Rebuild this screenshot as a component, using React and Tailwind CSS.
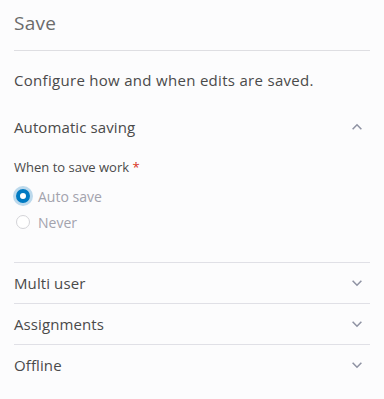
import React, { useState } from "react";

const Chevron = ({ up }) => (
  <svg width="14" height="14" viewBox="0 0 16 16" className="text-[#8f93a3]">
    <path
      d={up ? "M3 10.5 8 5.5 13 10.5" : "M3 5.5 8 10.5 13 5.5"}
      fill="none"
      stroke="currentColor"
      strokeWidth="1.8"
    />
  </svg>
);

const Section = ({ title, open, children }) => (
  <div className="border-t border-[#e0e0e6] first:border-t-0">
    <div className="flex items-center justify-between h-[40px] pr-[6px]">
      <span className="text-[15px] text-[#4a4a4a] tracking-[0.1px]">{title}</span>
      <Chevron up={open} />
    </div>
    {open && children}
  </div>
);

const Radio = ({ checked, label, onClick }) => (
  <label className="flex items-center gap-[8px] h-[26px] cursor-pointer" onClick={onClick}>
    {checked ? (
      <span className="ml-[2px] w-[14px] h-[14px] rounded-full border-[4px] border-[#007ac2] bg-white ring-[3px] ring-[#bcd9ec]" />
    ) : (
      <span className="ml-[2px] w-[14px] h-[14px] rounded-full border border-[#d4d4d8] bg-white" />
    )}
    <span className="text-[14px] text-[#a3a3ad]">{label}</span>
  </label>
);

export default function App() {
  const [mode, setMode] = useState("auto");

  return (
    <div
      className="w-[384px] h-[399px] bg-[#fcfcfd] px-[14px]"
      style={{ fontFamily: "'Open Sans', sans-serif" }}
    >
      <div className="pt-[9px] h-[51px] border-b border-[#dedee2] flex items-start">
        <h1 className="text-[19px] text-[#6b6b6b] leading-[28px] tracking-[0.3px]">Save</h1>
      </div>

      <p className="mt-[17px] text-[15px] text-[#4a4a4a] leading-[24px] tracking-[0.3px]">
        Configure how and when edits are saved.
      </p>

      <div className="mt-[15px]">
        <Section title="Automatic saving" open>
          <div className="pb-[27px] pt-[10px]">
            <div className="text-[13px] text-[#4a4a4a] leading-[20px] mb-[6px]">
              When to save work <span className="text-[#d83020]">*</span>
            </div>
            <Radio checked={mode === "auto"} label="Auto save" onClick={() => setMode("auto")} />
            <Radio checked={mode === "never"} label="Never" onClick={() => setMode("never")} />
          </div>
        </Section>
        <Section title="Multi user" />
        <Section title="Assignments" />
        <Section title="Offline" />
      </div>
    </div>
  );
}
